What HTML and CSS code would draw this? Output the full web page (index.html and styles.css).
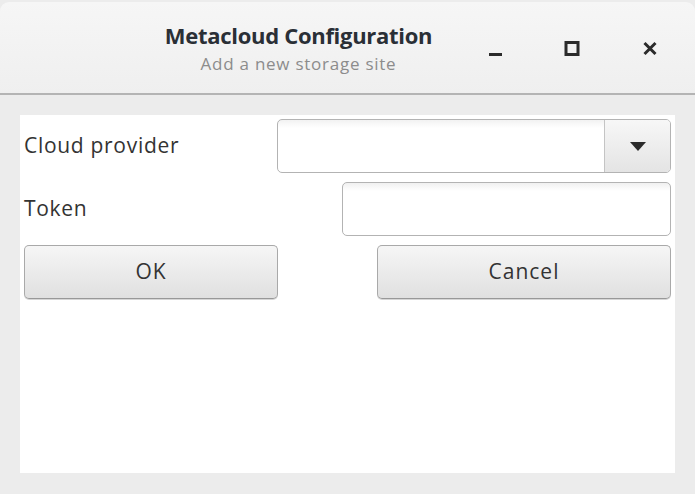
FILE: index.html
```html
<!DOCTYPE html>
<html>
<head>
<meta charset="utf-8">
<link rel="stylesheet" href="styles.css">
</head>
<body>
<div class="window">
  <header class="titlebar">
    <div class="titles">
      <div class="title">Metacloud Configuration</div>
      <div class="subtitle">Add a new storage site</div>
    </div>
    <div class="controls">
      <span class="ctl"><svg width="16" height="16" viewBox="0 0 16 16"><rect x="3" y="12" width="13" height="3" fill="#2b2b2b"/></svg></span>
      <span class="ctl"><svg width="16" height="16" viewBox="0 0 16 16"><rect x="2" y="1.5" width="12" height="12" fill="none" stroke="#2b2b2b" stroke-width="3"/></svg></span>
      <span class="ctl"><svg width="16" height="16" viewBox="0 0 16 16"><path d="M2.5 2 L13.5 13 M13.5 2 L2.5 13" stroke="#2b2b2b" stroke-width="3"/></svg></span>
    </div>
  </header>
  <main class="body">
    <div class="panel">
      <div class="row">
        <span class="label">Cloud provider</span>
        <div class="combo">
          <div class="combo-value"></div>
          <div class="combo-btn"><svg width="16" height="9" viewBox="0 0 16 9"><path d="M0 0 H16 L8 9 Z" fill="#2b2b2b"/></svg></div>
        </div>
      </div>
      <div class="row">
        <span class="label">Token</span>
        <div class="field token"></div>
      </div>
      <div class="row">
        <button class="btn ok">OK</button>
        <button class="btn cancel">Cancel</button>
      </div>
    </div>
  </main>
</div>
</body>
</html>
```
FILE: styles.css
```css
html, body {
  margin: 0;
  padding: 0;
  background: #ffffff;
}
body {
  font-family: "Open Sans", "Noto Sans", sans-serif;
  width: 695px;
  height: 494px;
  overflow: hidden;
}
.window {
  width: 695px;
  height: 494px;
  display: flex;
  flex-direction: column;
  background: #ececec;
}
.titlebar {
  height: 91px;
  margin-top: 2px;
  border-radius: 9px 9px 0 0;
  background: linear-gradient(#f6f6f6, #efefef);
  border-bottom: 2px solid #b4b4b4;
  position: relative;
  display: flex;
  justify-content: center;
}
.titles {
  display: flex;
  flex-direction: column;
  align-items: center;
  margin-left: -98px;
  padding-top: 18px;
}
.title {
  font-weight: 700;
  font-size: 22px;
  color: #2a2f36;
  letter-spacing: -0.3px;
  line-height: 30px;
}
.subtitle {
  font-size: 17px;
  color: #8c8c8c;
  line-height: 22px;
  letter-spacing: 0.75px;
  margin-top: 3px;
}
.controls {
  position: absolute;
  top: 39px;
  right: 37px;
  display: flex;
  gap: 62px;
  align-items: center;
}
.ctl {
  display: flex;
  width: 16px;
  height: 16px;
  align-items: center;
  justify-content: center;
}
.body {
  flex: 1;
  padding: 20px 20px 21px 20px;
  display: flex;
}
.panel {
  flex: 1;
  background: #ffffff;
  padding: 4px;
  display: flex;
  flex-direction: column;
  gap: 9px;
}
.row {
  display: flex;
  justify-content: space-between;
  align-items: center;
  height: 54px;
}
.label {
  font-size: 21px;
  color: #333333;
  letter-spacing: 0.7px;
  margin-top: -2px;
}
.combo {
  width: 394px;
  height: 54px;
  box-sizing: border-box;
  border: 1px solid #b3b3b3;
  border-radius: 5px;
  display: flex;
  overflow: hidden;
  background: linear-gradient(#f2f2f2, #ffffff 8px);
}
.combo-value {
  flex: 1;
}
.combo-btn {
  width: 65px;
  border-left: 1px solid #c4c4c4;
  background: linear-gradient(#f7f7f7, #e4e4e4);
  display: flex;
  align-items: center;
  justify-content: center;
}
.field {
  height: 54px;
  box-sizing: border-box;
  border: 1px solid #b3b3b3;
  border-radius: 5px;
  background: linear-gradient(#f0f0f0, #ffffff 8px);
}
.token {
  width: 329px;
}
.btn {
  height: 54px;
  box-sizing: border-box;
  border: 1px solid #a9a9a9;
  border-bottom-color: #989898;
  border-radius: 5px;
  background: linear-gradient(#f6f6f6, #e0e0e0);
  font-family: "Open Sans", "Noto Sans", sans-serif;
  font-size: 21px;
  color: #333333;
  letter-spacing: 1px;
  padding: 0 0 2px 0;
  box-shadow: 0 1px 0 #d6d6d6;
}
.ok {
  width: 254px;
}
.cancel {
  width: 294px;
}
```
